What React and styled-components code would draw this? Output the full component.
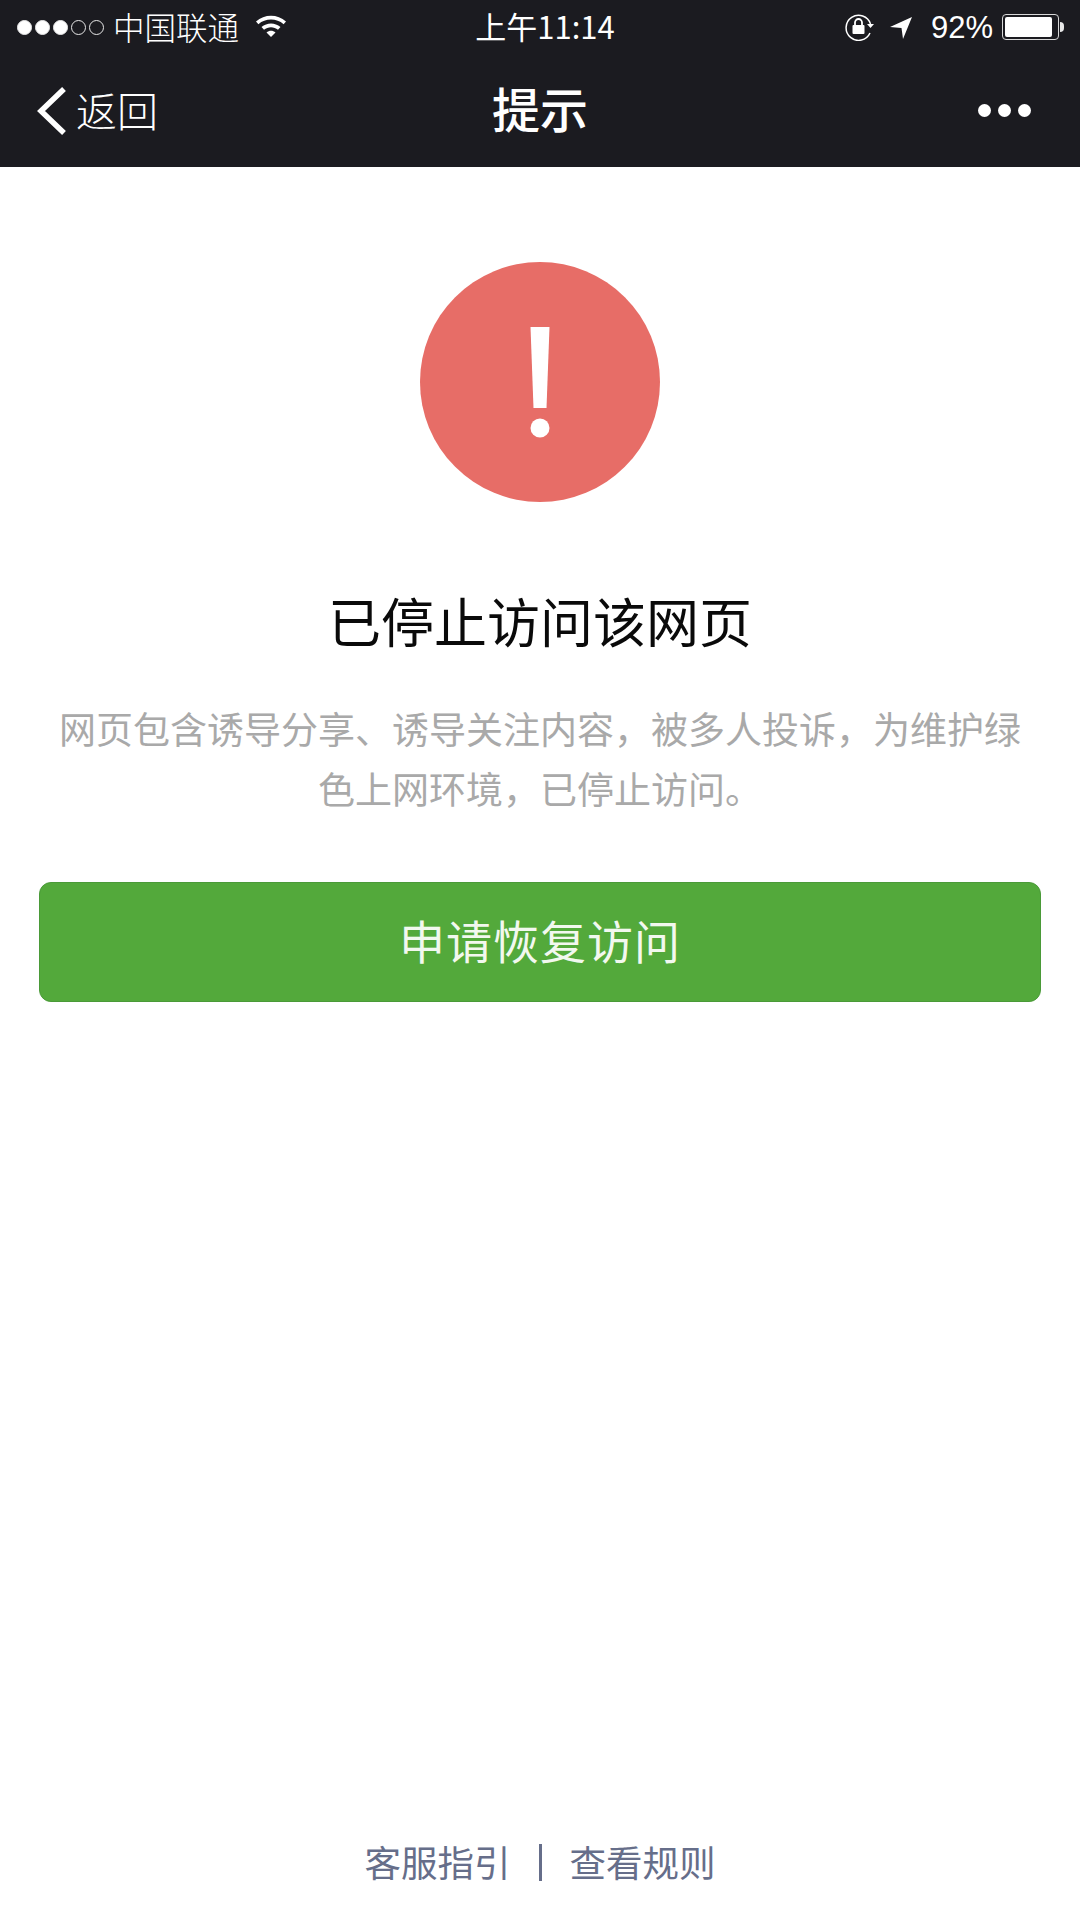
import styled, { createGlobalStyle } from 'styled-components';

const cjkFont = '"Noto Sans CJK SC", "Liberation Sans", sans-serif';
const latinFont = '"Liberation Sans", "Noto Sans CJK SC", sans-serif';

const GlobalStyle = createGlobalStyle`
  html, body {
    margin: 0;
    padding: 0;
    background: #fff;
  }
`;

const Page = styled.div`
  display: flex;
  flex-direction: column;
  width: 1080px;
  height: 1920px;
  overflow: hidden;
  background: #fff;
  font-family: ${cjkFont};
`;

const Header = styled.header`
  display: flex;
  flex-direction: column;
  height: 167px;
  background: #1b1b20;
  color: #fff;
`;

const StatusBar = styled.div`
  display: grid;
  grid-template-columns: 1fr auto 1fr;
  align-items: center;
  height: 54px;
  padding: 0 7px 0 17px;
`;

const StatusLeft = styled.div`
  display: flex;
  align-items: center;
`;

const StatusRight = styled.div`
  display: flex;
  align-items: center;
  justify-content: flex-end;
`;

const Signal = styled.div`
  display: flex;
  gap: 3px;
  margin-right: 9px;
`;

const SignalDot = styled.span`
  box-sizing: border-box;
  width: 15px;
  height: 15px;
  border-radius: 50%;
  border: 1px solid #e8e8e8;
  background: ${({ $on }) => ($on ? '#fff' : 'transparent')};
`;

const Carrier = styled.span`
  padding-bottom: 2px;
  font-size: 31.5px;
  line-height: 34px;
  font-weight: 300;
`;

const WifiIcon = styled.svg`
  width: 32px;
  height: 24px;
  margin-left: 16px;
  margin-top: -4px;
`;

const Clock = styled.span`
  padding-bottom: 2px;
  font-size: 31px;
  line-height: 34px;
  font-family: ${cjkFont};
`;

const Percent = styled.span`
  font-family: ${latinFont};
  font-size: 31px;
  line-height: 34px;
  margin: 1px 9px 0 18px;
`;

const LockIcon = styled.svg`
  width: 30px;
  height: 28px;
  margin-right: 14px;
`;

const ArrowIcon = styled.svg`
  width: 24px;
  height: 24px;
`;

const Battery = styled.div`
  position: relative;
  box-sizing: border-box;
  width: 57px;
  height: 26px;
  padding: 2px;
  margin-right: 14px;
  border: 1px solid #d8d8d8;
  border-radius: 4px;

  &::after {
    content: '';
    position: absolute;
    top: 7px;
    right: -6px;
    width: 4px;
    height: 10px;
    border-radius: 0 4px 4px 0;
    background: #e8e8e8;
  }
`;

const BatteryFill = styled.div`
  height: 100%;
  width: 92%;
  border-radius: 2px;
  background: #fff;
`;

const NavBar = styled.nav`
  display: grid;
  grid-template-columns: 1fr auto 1fr;
  align-items: center;
  height: 113px;
  padding: 0 36px;
`;

const BackLink = styled.div`
  display: flex;
  align-items: center;
`;

const BackIcon = styled.svg`
  width: 32px;
  height: 50px;
  margin-right: 8px;
`;

const BackLabel = styled.span`
  padding-bottom: 4px;
  font-size: 41px;
  line-height: 50px;
  font-weight: 300;
`;

const NavTitle = styled.h1`
  margin: 0;
  padding-bottom: 7px;
  font-size: 48px;
  line-height: 60px;
  font-weight: 500;
`;

const MoreDots = styled.div`
  display: flex;
  justify-content: flex-end;
  gap: 7px;
  margin-right: 13px;
`;

const MoreDot = styled.span`
  width: 13px;
  height: 13px;
  border-radius: 50%;
  background: #fff;
`;

const Content = styled.main`
  flex: 1;
  display: flex;
  flex-direction: column;
  align-items: center;
  padding: 95px 39px 0;
`;

const WarnIcon = styled.svg`
  display: block;
  width: 240px;
  height: 240px;
  margin-bottom: 84px;
`;

const Title = styled.h2`
  margin: 0 0 44px;
  font-size: 53px;
  line-height: 68px;
  font-weight: 400;
  color: #0a0a0a;
`;

const Description = styled.p`
  width: 970px;
  margin: 0 0 64px;
  text-align: center;
  font-size: 37px;
  line-height: 60px;
  color: #a9a9a9;
`;

const PrimaryButton = styled.button`
  box-sizing: border-box;
  width: 1002px;
  height: 120px;
  padding: 0 0 7px;
  border: 1px solid #4a9a38;
  border-radius: 12px;
  background: #53a93b;
  color: #f2f8ef;
  font-family: ${cjkFont};
  font-size: 46px;
  letter-spacing: 1px;
`;

const Footer = styled.footer`
  display: flex;
  align-items: center;
  justify-content: center;
  height: 116px;
  color: #666e8a;
  font-size: 36.5px;
`;

const FooterLink = styled.span`
  line-height: 50px;
`;

const FooterDivider = styled.span`
  width: 3px;
  height: 37px;
  margin: 0 28px;
  background: #666e8a;
`;

const App = () => (
  <>
    <GlobalStyle />
    <Page>
      <Header>
        <StatusBar>
          <StatusLeft>
            <Signal>
              <SignalDot $on />
              <SignalDot $on />
              <SignalDot $on />
              <SignalDot />
              <SignalDot />
            </Signal>
            <Carrier>中国联通</Carrier>
            <WifiIcon viewBox="0 0 32 24">
              <path d="M1 8.5C9.5 .8 22.5 .8 31 8.5l-2.4 2.7C21.500 5 10.500 5 3.400 11.200z" fill="#fff" />
              <path d="M6.500 14C12 9.200 20 9.200 25.500 14l-2.500 2.700c-4-3.400-10-3.400-14 0z" fill="#fff" />
              <path d="M11.500 19.500c2.700-2.200 6.300-2.200 9 0L16 24z" fill="#fff" />
            </WifiIcon>
          </StatusLeft>
          <Clock>上午11:14</Clock>
          <StatusRight>
            <LockIcon viewBox="0 0 30 28">
              <path d="M25 20A12.500 12.500 0 1 1 25.500 11" fill="none" stroke="#fff" strokeWidth="1.500" />
              <path d="M22 11h7l-3.500 4z" fill="#fff" />
              <rect x="7.500" y="12" width="12" height="9" rx="1" fill="#fff" />
              <path d="M10 12V9.500a3.500 3.500 0 0 1 7 0V12" fill="none" stroke="#fff" strokeWidth="1.800" />
            </LockIcon>
            <ArrowIcon viewBox="0 0 24 24">
              <path d="M1 12L23 2 14 24 12.500 13z" fill="#fff" />
            </ArrowIcon>
            <Percent>92%</Percent>
            <Battery>
              <BatteryFill />
            </Battery>
          </StatusRight>
        </StatusBar>
        <NavBar>
          <BackLink>
            <BackIcon viewBox="0 0 32 50">
              <path d="M28 3L5 25l23 22" fill="none" stroke="#fff" strokeWidth="5.500" />
            </BackIcon>
            <BackLabel>返回</BackLabel>
          </BackLink>
          <NavTitle>提示</NavTitle>
          <MoreDots>
            <MoreDot />
            <MoreDot />
            <MoreDot />
          </MoreDots>
        </NavBar>
      </Header>
      <Content>
        <WarnIcon viewBox="0 0 240 240">
          <circle cx="120" cy="120" r="120" fill="#e76d67" />
          <path d="M110.500 65h19l-3 81h-13z" fill="#fff" />
          <circle cx="120" cy="166" r="9.500" fill="#fff" />
        </WarnIcon>
        <Title>已停止访问该网页</Title>
        <Description>
          网页包含诱导分享、诱导关注内容，被多人投诉，为维护绿色上网环境，已停止访问。
        </Description>
        <PrimaryButton>申请恢复访问</PrimaryButton>
      </Content>
      <Footer>
        <FooterLink>客服指引</FooterLink>
        <FooterDivider />
        <FooterLink>查看规则</FooterLink>
      </Footer>
    </Page>
  </>
);

export default App;
